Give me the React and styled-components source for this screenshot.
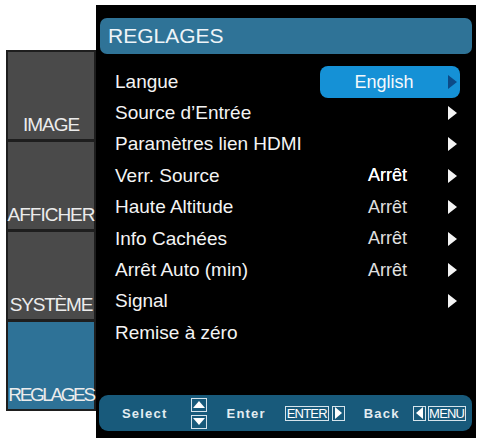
import styled, { createGlobalStyle } from "styled-components"

const GlobalStyle = createGlobalStyle`
  html, body {
    margin: 0;
    padding: 0;
    background: #ffffff;
  }
  body {
    font-family: "Liberation Sans", Arial, sans-serif;
  }
`

const Screen = styled.div`
  display: flex;
  align-items: flex-start;
  padding-left: 6px;
  width: 478px;
  height: 440px;
  box-sizing: border-box;
`

const Sidebar = styled.div`
  margin-top: 50px;
  width: 90px;
  box-sizing: border-box;
  padding: 2px;
  background: #1e1e1e;
  display: flex;
  flex-direction: column;
  gap: 3px;
`

const Tab = styled.div`
  height: 87px;
  background: ${(p) => (p.$active ? "#2e7297" : "#4a4a4a")};
  color: #ececec;
  display: flex;
  align-items: flex-end;
  justify-content: center;
  padding-bottom: 3px;
  box-sizing: border-box;
  font-size: 19px;
  line-height: 22px;
  letter-spacing: ${(p) => p.$spacing}px;
  white-space: nowrap;
`

const Panel = styled.div`
  margin-top: 5px;
  width: 380px;
  height: 433px;
  box-sizing: border-box;
  background: #000;
  padding: 13px 4px 7px 4px;
  display: flex;
  flex-direction: column;
`

const Header = styled.div`
  height: 36px;
  border-radius: 7px;
  background: #2f7397;
  color: #eef4f8;
  font-size: 21px;
  display: flex;
  align-items: center;
  padding-left: 8px;
`

const List = styled.div`
  margin-top: 12px;
  padding: 0 15px;
  display: flex;
  flex-direction: column;
`

const Row = styled.div`
  height: 31.4px;
  display: grid;
  grid-template-columns: 1fr 80px 9px;
  align-items: center;
  color: #f4f4f4;
`

const Label = styled.span`
  font-size: 19px;
  white-space: nowrap;
`

const Value = styled.span`
  font-size: 18px;
  color: ${(p) => (p.$bright ? "#ffffff" : "#e0e0e0")};
  text-shadow: ${(p) => (p.$bright ? "0 0 0.3px #fff" : "none")};
`

const Arrow = styled.span`
  width: 0;
  height: 0;
  border-top: 7px solid transparent;
  border-bottom: 7px solid transparent;
  border-left: 9px solid ${(p) => p.$color || "#f4f4f4"};
`

const Pill = styled.div`
  grid-column: 2 / 4;
  justify-self: end;
  width: 140px;
  height: 32px;
  margin-right: -3px;
  border-radius: 8px;
  background: #1591d6;
  display: flex;
  align-items: center;
  padding-right: 3px;
  box-sizing: border-box;
`

const PillText = styled.span`
  flex: 1;
  text-align: center;
  font-size: 18px;
  color: #f4f9fc;
`

const Footer = styled.div`
  margin-top: auto;
  height: 36px;
  margin-left: -1px;
  border-radius: 9px;
  background: #185a7b;
  display: flex;
  align-items: center;
  padding-left: 23px;
  color: #e3edf2;
`

const Hint = styled.span`
  font-size: 13px;
  font-weight: bold;
  letter-spacing: 1.2px;
  margin-right: ${(p) => p.$gap || 0}px;
`

const KeyBox = styled.span`
  height: ${(p) => p.$h || 15}px;
  box-sizing: border-box;
  border: 1px solid #d6e4ec;
  display: inline-flex;
  align-items: center;
  justify-content: center;
  font-size: 13px;
  letter-spacing: -0.8px;
  color: #fff;
  padding: 0 ${(p) => (p.$icon ? 0 : 2)}px;
  width: ${(p) => (p.$w ? p.$w + "px" : "auto")};
  margin-right: ${(p) => p.$gap || 0}px;
`

const Stack = styled.span`
  display: flex;
  flex-direction: column;
  gap: 3px;
  margin-right: 20px;
`

const Tri = styled.span`
  width: 0;
  height: 0;
  ${(p) =>
    p.$dir === "up"
      ? "border-left: 6px solid transparent; border-right: 6px solid transparent; border-bottom: 7px solid #fff;"
      : p.$dir === "down"
      ? "border-left: 6px solid transparent; border-right: 6px solid transparent; border-top: 7px solid #fff;"
      : p.$dir === "left"
      ? "border-top: 6px solid transparent; border-bottom: 6px solid transparent; border-right: 7px solid #fff;"
      : "border-top: 6px solid transparent; border-bottom: 6px solid transparent; border-left: 7px solid #fff;"}
`

const tabs = [
  { name: "IMAGE", spacing: -1 },
  { name: "AFFICHER", spacing: -1 },
  { name: "SYSTÈME", spacing: -1.2 },
  { name: "REGLAGES", spacing: -2.4, active: true },
]

const items = [
  { label: "Langue", pill: "English" },
  { label: "Source d’Entrée", arrow: true },
  { label: "Paramètres lien HDMI", arrow: true },
  { label: "Verr. Source", value: "Arrêt", bright: true, arrow: true },
  { label: "Haute Altitude", value: "Arrêt", arrow: true },
  { label: "Info Cachées", value: "Arrêt", arrow: true },
  { label: "Arrêt Auto (min)", value: "Arrêt", arrow: true },
  { label: "Signal", arrow: true },
  { label: "Remise à zéro" },
]

const App = () => {
  return (
    <>
      <GlobalStyle />
      <Screen>
        <Sidebar>
          {tabs.map((t) => (
            <Tab key={t.name} $active={t.active} $spacing={t.spacing}>
              {t.name}
            </Tab>
          ))}
        </Sidebar>
        <Panel>
          <Header>REGLAGES</Header>
          <List>
            {items.map((it) => (
              <Row key={it.label}>
                <Label>{it.label}</Label>
                {it.pill ? (
                  <Pill>
                    <PillText>{it.pill}</PillText>
                    <Arrow $color="#0c4a86" />
                  </Pill>
                ) : (
                  <>
                    <Value $bright={it.bright}>{it.value}</Value>
                    {it.arrow ? <Arrow /> : <span />}
                  </>
                )}
              </Row>
            ))}
          </List>
          <Footer>
            <Hint $gap={23}>Select</Hint>
            <Stack>
              <KeyBox $icon $w={16} $h={14}>
                <Tri $dir="up" />
              </KeyBox>
              <KeyBox $icon $w={16} $h={14}>
                <Tri $dir="down" />
              </KeyBox>
            </Stack>
            <Hint $gap={19}>Enter</Hint>
            <KeyBox $w={44} $gap={3}>ENTER</KeyBox>
            <KeyBox $icon $w={13} $gap={19}>
              <Tri $dir="right" />
            </KeyBox>
            <Hint $gap={13}>Back</Hint>
            <KeyBox $icon $w={13} $gap={2}>
              <Tri $dir="left" />
            </KeyBox>
            <KeyBox $w={38}>MENU</KeyBox>
          </Footer>
        </Panel>
      </Screen>
    </>
  )
}

export default App
